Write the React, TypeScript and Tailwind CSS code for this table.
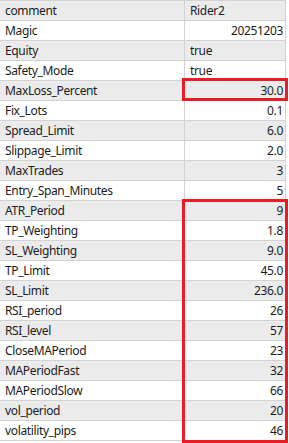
const ROWS: [string, string, 'l' | 'r'][] = [
  ['comment', 'Rider2', 'l'],
  ['Magic', '20251203', 'r'],
  ['Equity', 'true', 'l'],
  ['Safety_Mode', 'true', 'l'],
  ['MaxLoss_Percent', '30.0', 'r'],
  ['Fix_Lots', '0.1', 'r'],
  ['Spread_Limit', '6.0', 'r'],
  ['Slippage_Limit', '2.0', 'r'],
  ['MaxTrades', '3', 'r'],
  ['Entry_Span_Minutes', '5', 'r'],
  ['ATR_Period', '9', 'r'],
  ['TP_Weighting', '1.8', 'r'],
  ['SL_Weighting', '9.0', 'r'],
  ['TP_Limit', '45.0', 'r'],
  ['SL_Limit', '236.0', 'r'],
  ['RSI_period', '26', 'r'],
  ['RSI_level', '57', 'r'],
  ['CloseMAPeriod', '23', 'r'],
  ['MAPeriodFast', '32', 'r'],
  ['MAPeriodSlow', '66', 'r'],
  ['vol_period', '20', 'r'],
  ['volatility_pips', '46', 'r'],
]

export default function App() {
  return (
    <div className="w-[289px] h-[443px] bg-white overflow-hidden">
      <div
        className="relative w-[286px] border-t border-r border-[#d2d2d2] text-[12px] tracking-[-0.35px] text-[#1b1b1b]"
        style={{ fontFamily: '"Noto Sans", "Open Sans", Arial, sans-serif' }}
      >
        {ROWS.map(([name, value, align], i) => (
          <div
            key={name}
            className={`flex h-[20px] border-b border-[#d2d2d2] leading-[19px] ${i % 2 === 0 ? 'bg-[#ebebeb]' : 'bg-white'}`}
          >
            <div className="w-[185px] shrink-0 border-r border-[#d2d2d2] pl-[5px] whitespace-nowrap">{name}</div>
            <div className={`flex-1 whitespace-nowrap ${align === 'r' ? 'text-right pr-[2px]' : 'pl-[5px]'}`}>
              {value}
            </div>
          </div>
        ))}

        {/* highlight boxes */}
        <div className="absolute left-[182px] top-[77px] w-[106px] h-[23px] border-[3px] border-[#ec1c24]" />
        <div className="absolute left-[182px] top-[198px] w-[106px] h-[244px] border-[3px] border-[#ec1c24]" />
      </div>
    </div>
  )
}
